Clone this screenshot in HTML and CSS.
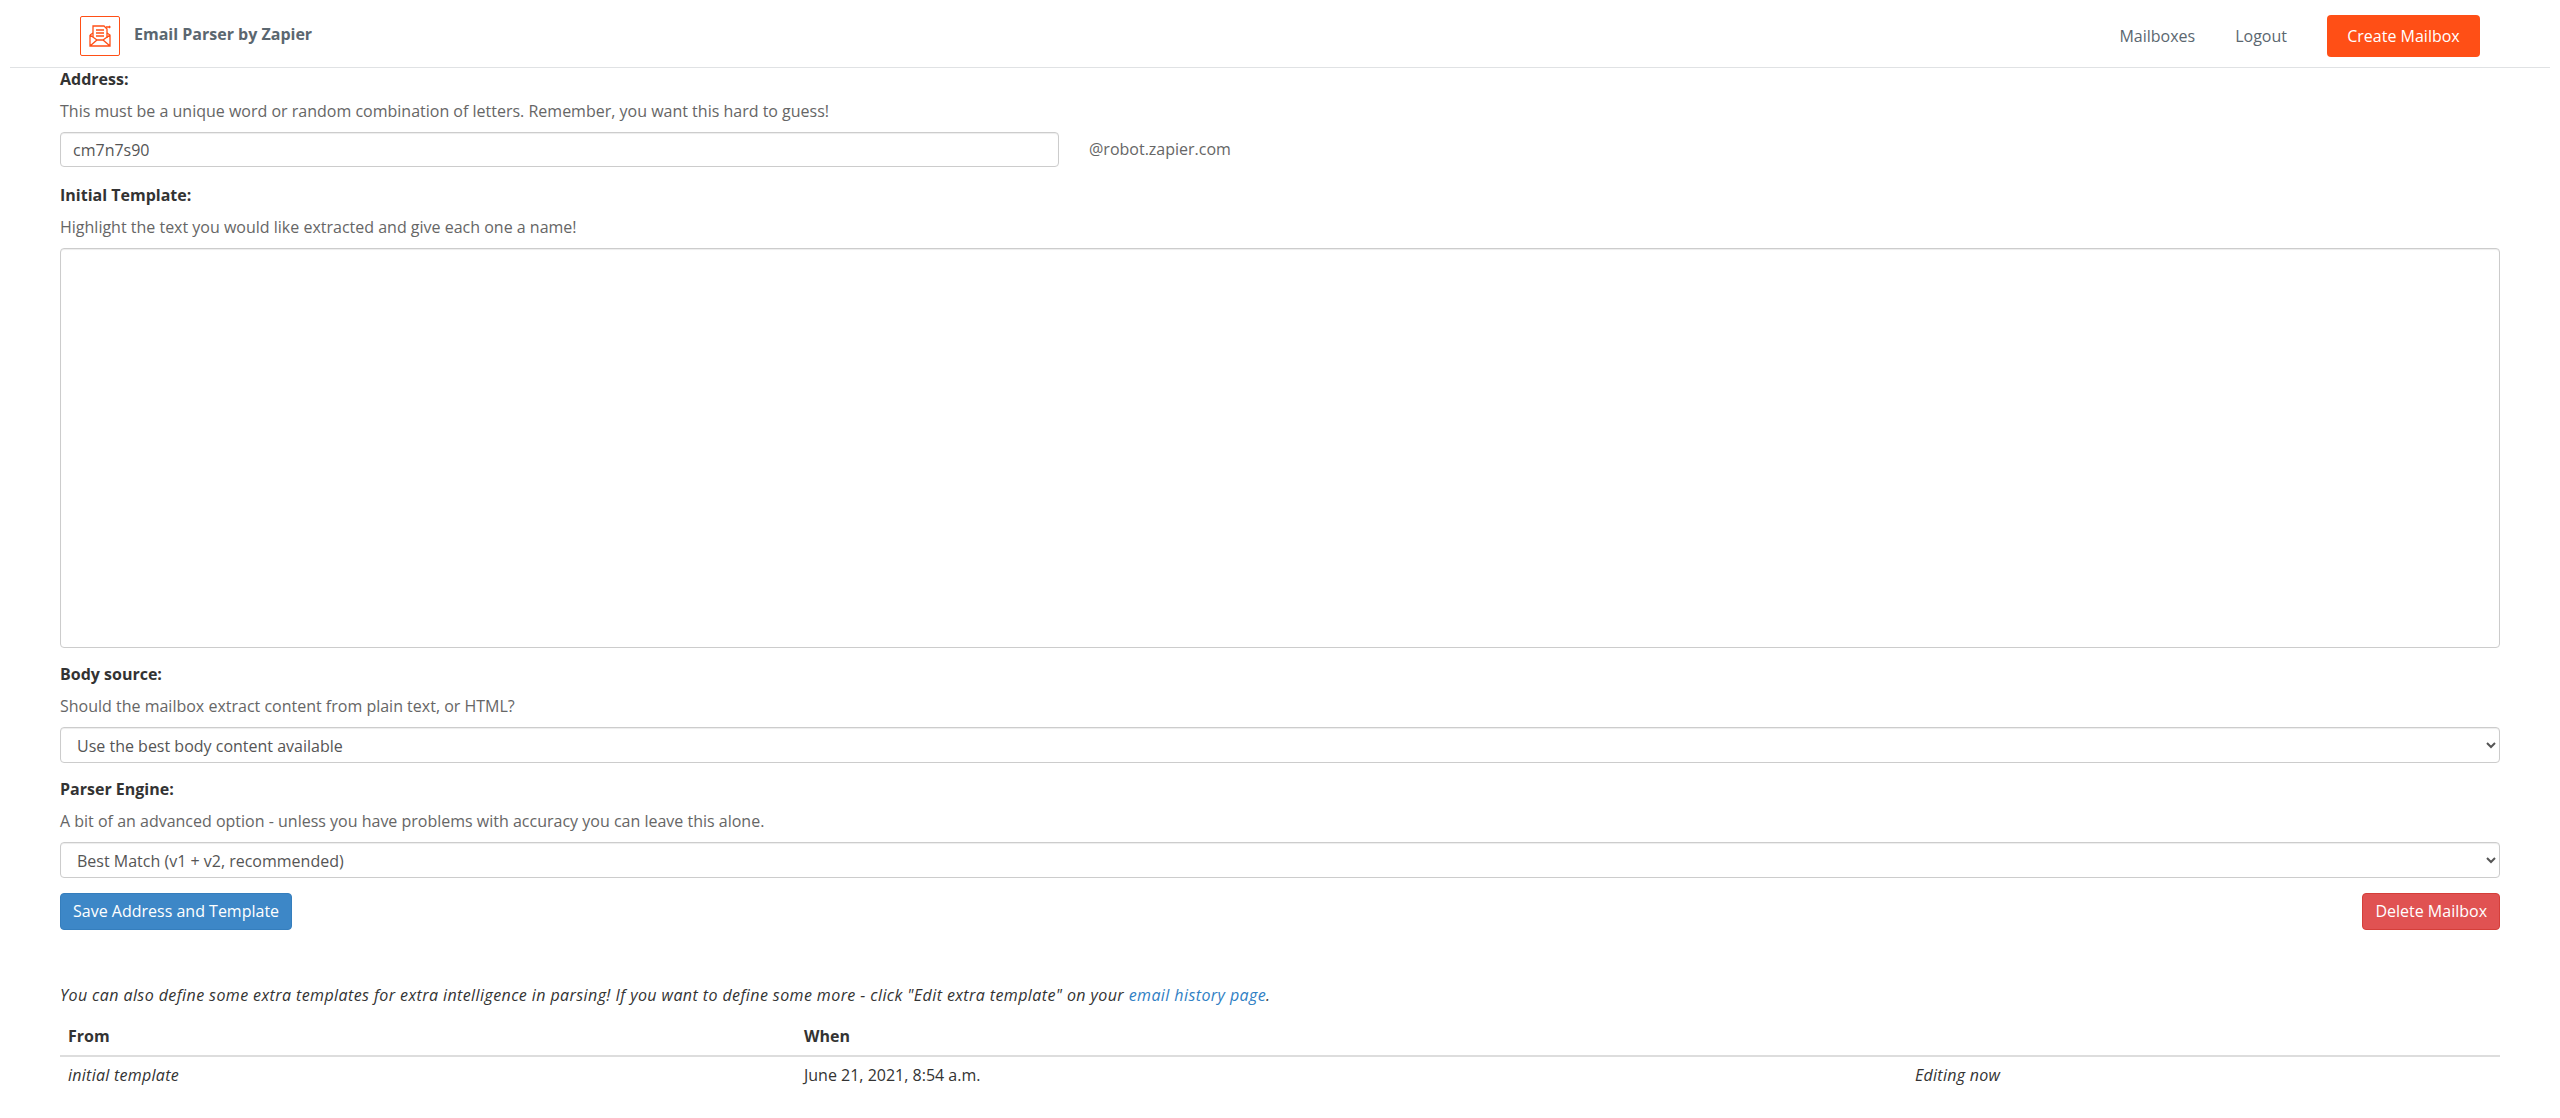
FILE: index.html
```html
<!DOCTYPE html>
<html lang="en">
<head>
<meta charset="utf-8">
<title>Email Parser by Zapier</title>
<link rel="stylesheet" href="styles.css">
</head>
<body>
<header class="topbar">
  <a class="brand" href="#">
    <span class="logo">
      <svg width="24" height="24" viewBox="0 0 24 24" fill="none" stroke="#ff4f16" stroke-width="1.3">
        <path d="M2 11v11h20V11l-3-2M5 9l-3 2M2 22l7-6h6l7 6M2 11l7 5M22 11l-7 5"/>
        <path d="M5 13V2h11l3 3v9"/>
        <path d="M8 6h8M8 9h8M8 12h8"/>
        <path d="M18 3h4M21 2l1 1-1 1"/>
      </svg>
    </span>
    <span class="brand-name">Email Parser by Zapier</span>
  </a>
  <nav class="nav">
    <a class="nav-link" href="#">Mailboxes</a>
    <a class="nav-link" href="#">Logout</a>
    <a class="btn btn-create" href="#">Create Mailbox</a>
  </nav>
</header>
<main class="page">
  <label class="label">Address:</label>
  <p class="help">This must be a unique word or random combination of letters. Remember, you want this hard to guess!</p>
  <div class="address-row">
    <input class="control address-input" type="text" value="cm7n7s90">
    <span class="domain">@robot.zapier.com</span>
  </div>
  <label class="label">Initial Template:</label>
  <p class="help">Highlight the text you would like extracted and give each one a name!</p>
  <textarea class="control template"></textarea>
  <label class="label">Body source:</label>
  <p class="help">Should the mailbox extract content from plain text, or HTML?</p>
  <select class="control select">
    <option>Use the best body content available</option>
  </select>
  <label class="label">Parser Engine:</label>
  <p class="help">A bit of an advanced option - unless you have problems with accuracy you can leave this alone.</p>
  <select class="control select">
    <option>Best Match (v1 + v2, recommended)</option>
  </select>
  <div class="actions">
    <button class="btn btn-save" type="button">Save Address and Template</button>
    <button class="btn btn-delete" type="button">Delete Mailbox</button>
  </div>
  <p class="note">You can also define some extra templates for extra intelligence in parsing! If you want to define some more - click "Edit extra template" on your <a href="#">email history page</a>.</p>
  <table class="history">
    <thead>
      <tr><th class="col-from">From</th><th class="col-when">When</th><th></th></tr>
    </thead>
    <tbody>
      <tr><td class="em">initial template</td><td>June 21, 2021, 8:54 a.m.</td><td class="em">Editing now</td></tr>
    </tbody>
  </table>
</main>
</body>
</html>
```
FILE: styles.css
```css
* { box-sizing: border-box; }
html, body { margin: 0; padding: 0; }
body {
  font-family: "Open Sans", sans-serif;
  font-size: 16px;
  line-height: 20px;
  color: #333;
  background: #fff;
  height: 1118px;
  overflow: hidden;
}
a { text-decoration: none; }
.topbar {
  display: flex;
  align-items: center;
  justify-content: space-between;
  height: 68px;
  margin: 0 10px;
  padding: 5px 70px 0;
  border-bottom: 1px solid #e0e2e4;
}
.brand { display: flex; align-items: center; gap: 14px; }
.logo {
  display: flex;
  align-items: center;
  justify-content: center;
  width: 40px;
  height: 40px;
  border: 1px solid #ff4f16;
  border-radius: 2px;
}
.brand-name { font-weight: 700; color: #5b6770; margin-bottom: 4px; }
.nav { display: flex; align-items: center; gap: 40px; }
.nav-link { color: #5b6770; }
.btn {
  display: inline-block;
  font-family: inherit;
  font-size: 16px;
  line-height: 20px;
  color: #fff;
  border-radius: 4px;
  cursor: pointer;
}
.btn-create {
  background: #ff4f16;
  padding: 11px 20px;
  height: 42px;
  width: 153px;
  text-align: center;
}
.page { padding: 1px 60px 0; }
.label { display: block; font-weight: 700; color: #333; margin-bottom: 12px; }
.help { margin: 0 0 11px; color: #666; }
.control {
  display: block;
  font-family: inherit;
  font-size: 16px;
  color: #555;
  background: #fff;
  border: 1px solid #ccc;
  border-radius: 4px;
  box-shadow: inset 0 1px 1px rgba(0, 0, 0, .075);
}
.address-row { display: flex; align-items: center; gap: 30px; margin-bottom: 18px; height: 35px; }
.address-input { width: 999px; height: 35px; padding: 6px 12px; }
.domain { color: #666; margin-bottom: 2px; }
.template { width: 100%; height: 400px; margin-bottom: 16px; resize: none; }
.select { width: 100%; height: 36px; padding: 6px 12px; margin-bottom: 16px; }
.actions { display: flex; justify-content: space-between; margin-top: -1px; }
.btn-save { background: #3d87c7; border: 1px solid #357ebd; height: 37px; padding: 0 12px 2px; }
.btn-delete { background: #e05252; border: 1px solid #d43f3a; height: 37px; padding: 0 12px 2px; }
.note { margin: 55px 0 11px; font-style: italic; color: #333; letter-spacing: .41px; }
.note a { color: #3080c4; }
.history { width: 100%; border-collapse: collapse; }
.history th { text-align: left; font-weight: 700; padding: 10px 8px 9px; border-bottom: 2px solid #ddd; }
.history td { padding: 8px; }
.col-from { width: 736px; }
.col-when { width: 1111px; }
.em { font-style: italic; letter-spacing: .27px; }
```
